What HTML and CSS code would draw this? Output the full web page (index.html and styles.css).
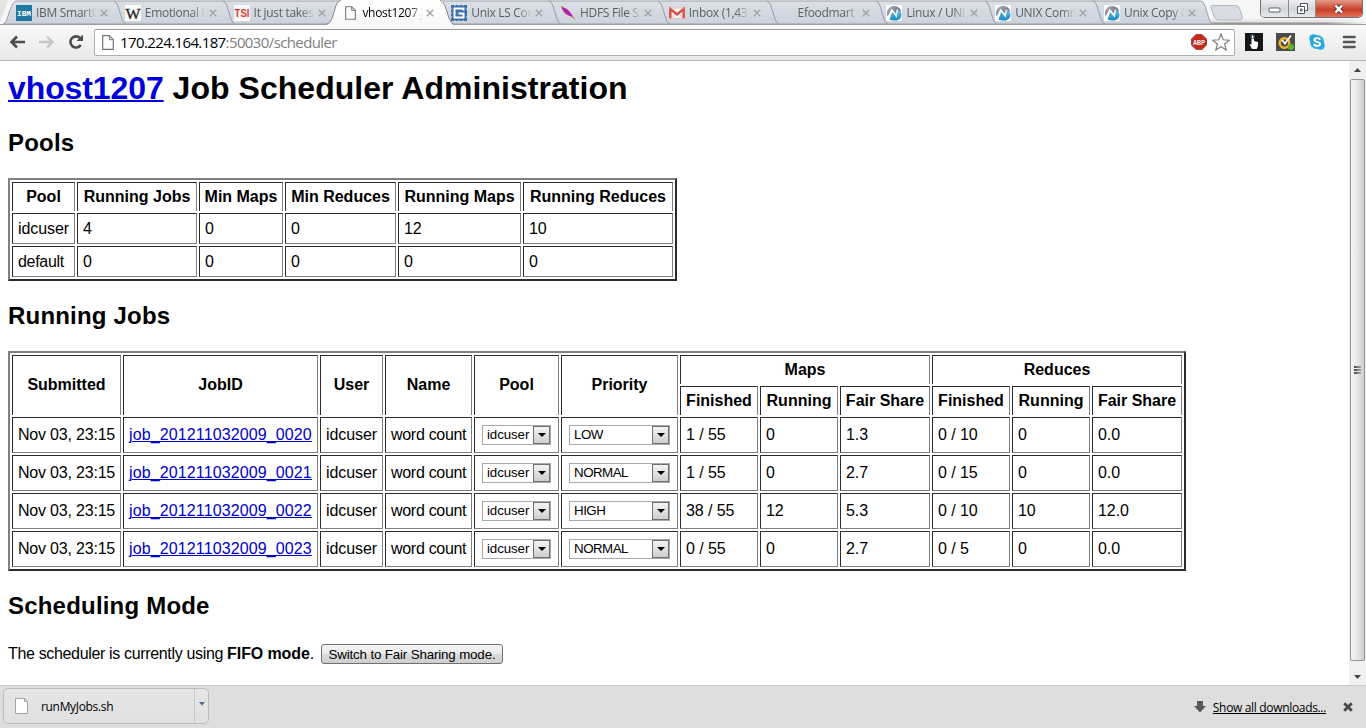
FILE: index.html
```html
<!DOCTYPE html>
<html lang="en">
<head>
<meta charset="utf-8">
<title>vhost1207 Job Scheduler Administration</title>
<link rel="stylesheet" href="styles.css">
</head>
<body>
<svg class="defs" width="0" height="0" aria-hidden="true">
  <defs>
    <linearGradient id="g-tab" x1="0" y1="0" x2="0" y2="1"><stop offset="0" stop-color="#dce1e8"/><stop offset="1" stop-color="#ccd2db"/></linearGradient>
    <linearGradient id="g-active" x1="0" y1="0" x2="0" y2="1"><stop offset="0" stop-color="#ffffff"/><stop offset="1" stop-color="#f8f8f8"/></linearGradient>
    <linearGradient id="g-shade" x1="0" y1="0" x2="0" y2="1"><stop offset="0" stop-color="#f6f6f6"/><stop offset=".5" stop-color="#e2e2e2"/><stop offset="1" stop-color="#5c5c5c"/></linearGradient>
    <linearGradient id="g-fade" x1="0" y1="0" x2="1" y2="0"><stop offset="0" stop-color="#f6f6f6" stop-opacity="0"/><stop offset="1" stop-color="#f6f6f6"/></linearGradient>
    <linearGradient id="g-blue" x1="0" y1="0" x2="0" y2="1"><stop offset="0" stop-color="#5cc4ee"/><stop offset="1" stop-color="#1c87c0"/></linearGradient>
    <linearGradient id="g-grey" x1="0" y1="0" x2="1" y2="1"><stop offset="0" stop-color="#b9b9c6"/><stop offset="1" stop-color="#4b4b63"/></linearGradient>
    <symbol id="i-close" viewBox="0 0 8 8"><path d="M.8.8 7.2 7.2M7.2.8.8 7.2" stroke="#a3a7ad" stroke-width="1.6" fill="none"/></symbol>
    <symbol id="i-page" viewBox="0 0 12 15"><path d="M.7.7h6.6l4 4v9.6H.7z" fill="#fff" stroke="#777" stroke-width="1.2"/><path d="M7.3.7v4h4" fill="none" stroke="#777"/></symbol>
    <symbol id="i-unix" viewBox="0 0 16 16"><rect width="16" height="16" fill="#fbfbfb"/><path d="M1.500 11.500C-.5 5 3.500 1 8 1c3.800 0 6.500 2 7 6L11 5v4.500L5.500 4z" fill="url(#g-grey)"/><path d="M3.500 14.500 5.800 6l4.400 5.500L11.500 5c2 .5 4 2.200 4 5 0 3.500-3 5.500-6.500 5.500-2 0-4-.2-5.500-1z" fill="url(#g-blue)"/><path d="M2.800 14 6 5.300l4.300 5.700 1-6.500" fill="none" stroke="#fff" stroke-width="1.400"/></symbol>
  </defs>
</svg>
<div class="window">
  <header class="tabstrip">
    <svg class="tabshapes" width="1366" height="25" viewBox="0 0 1366 25" aria-hidden="true">
      <rect width="1366" height="25" fill="#f6f6f6"/>
      <path d="M0 0h8L0 22z" fill="#e4e4e4"/>
      <path d="M1202 18h164v7h-164z" fill="url(#g-shade)"/>
      <path d="M1325 17h41v8h-41z" fill="url(#g-fade)"/>
      <path d="M3 24c3-1 4-5 6-11s4-11 7-12h1185q3 1 4 5l4 13q1 4 4 5z" fill="url(#g-tab)" stroke="#9ba1a8"/>
      <g fill="none" stroke="#969ca4">
        <path d="M114 1q3 1 4 5l4 13q1 4 4 5M223 1q3 1 4 5l4 13q1 4 4 5M549 1q3 1 4 5l4 13q1 4 4 5M658 1q3 1 4 5l4 13q1 4 4 5M767 1q3 1 4 5l4 13q1 4 4 5M876 1q3 1 4 5l4 13q1 4 4 5M985 1q3 1 4 5l4 13q1 4 4 5M1093 1q3 1 4 5l4 13q1 4 4 5"/>
      </g>
      <path d="M0 24.500h1366" stroke="#9a9fa5"/>
      <path d="M326 25q4-1 6-6l4-13q1-5 5-6h100q3 1 4 6l4 13q2 5 5 6z" fill="url(#g-active)"/>
      <path d="M326 24.500q4-1 6-6l4-13q1-4 5-5.500M440 0q3 1 5 6l4 12q2 5 5 6.500" fill="none" stroke="#888"/>
      <path d="M1212 5.500h23q4 0 5 4l2 7q1 3.500-3 3.500h-20q-4 0-5-4l-3-8q-.5-2.500 1-2.500z" fill="#d9dde3" stroke="#b3b7bd"/>
    </svg>
    <div class="tabs">
      <div class="tab"><svg class="fav" viewBox="0 0 16 16"><rect width="16" height="16" fill="#23789f"/><text x="8" y="10.500" class="ibm" text-anchor="middle" textLength="14" lengthAdjust="spacingAndGlyphs">IBM</text></svg><span class="title">IBM SmartC</span><svg class="x"><use href="#i-close"/></svg></div>
      <div class="tab"><svg class="fav" viewBox="0 0 16 16"><rect width="16" height="16" fill="#fafafa"/><text x="8" y="13.500" class="wiki" text-anchor="middle" textLength="15" lengthAdjust="spacingAndGlyphs">W</text></svg><span class="title">Emotional i</span><svg class="x"><use href="#i-close"/></svg></div>
      <div class="tab"><svg class="fav" viewBox="0 0 16 16"><rect width="16" height="16" fill="#f7f7f7"/><text x="8" y="11.500" class="tsi" text-anchor="middle" textLength="15" lengthAdjust="spacingAndGlyphs">TSI</text></svg><span class="title">It just takes</span><svg class="x"><use href="#i-close"/></svg></div>
      <div class="tab active"><span class="fav"><svg class="pageicon"><use href="#i-page"/></svg></span><span class="title">vhost1207 J</span><svg class="x"><use href="#i-close"/></svg></div>
      <div class="tab"><svg class="fav" viewBox="0 0 16 16"><rect width="16" height="16" fill="#3c70a8"/><path d="M12.500 5.500V3.500h-9v9h9v-4H7.500" fill="none" stroke="#fff" stroke-width="2"/><path d="M0 4h1M0 8h1M0 12h1M15 4h1M15 12h1M4 0v1M8 0v1M12 0v1M4 15v1M8 15v1M12 15v1" stroke="#dfe8f2"/></svg><span class="title">Unix LS Con</span><svg class="x"><use href="#i-close"/></svg></div>
      <div class="tab"><svg class="fav" viewBox="0 0 16 16"><path d="M1.500 2c3.500 0 7.500 3 10 7l3 4.500-4.500-2.500C6 10 2.500 6.500 1.500 2z" fill="#c222a4"/><path d="M2 2l9 9" stroke="#8b2a8e"/><path d="M12 11l3 3.500M1 1.500l3 1" stroke="#e07a3a"/></svg><span class="title">HDFS File S</span><svg class="x"><use href="#i-close"/></svg></div>
      <div class="tab"><svg class="fav" viewBox="0 0 16 16"><path d="M0 2.500h16v11H0z" fill="#fbf3f2"/><path d="M1.300 13.500V4L8 9.500 14.700 4v9.500" fill="none" stroke="#d9534c" stroke-width="2.500"/><path d="M0 3h16M0 13.300h16M3 12l3-3M13 12l-3-3" stroke="#e3a5a1" stroke-width=".7"/></svg><span class="title">Inbox (1,437</span><svg class="x"><use href="#i-close"/></svg></div>
      <div class="tab"><span class="fav"></span><span class="title">Efoodmart</span><svg class="x"><use href="#i-close"/></svg></div>
      <div class="tab"><svg class="fav"><use href="#i-unix"/></svg><span class="title">Linux / UNI</span><svg class="x"><use href="#i-close"/></svg></div>
      <div class="tab"><svg class="fav"><use href="#i-unix"/></svg><span class="title">UNIX Com<span class="thin">m</span></span><svg class="x"><use href="#i-close"/></svg></div>
      <div class="tab"><svg class="fav"><use href="#i-unix"/></svg><span class="title">Unix Copy C</span><svg class="x"><use href="#i-close"/></svg></div>
    </div>
    <div class="controls">
      <span class="ctl min"><svg width="14" height="6"><rect x="1" y="1" width="11" height="4" rx="1" fill="#fff" stroke="#5d6270"/></svg></span>
      <span class="ctl max"><svg width="13" height="13"><path d="M4.500 1.500h7v7h-7z" fill="#fff" stroke="#4f5360"/><path d="M1.500 4.500h7v7h-7z" fill="#fff" stroke="#4f5360"/><path d="M4.500 7h1.500v2H4.500z" fill="#fff" stroke="#4f5360"/></svg></span>
      <span class="ctl shut"><svg width="14" height="12"><path d="M3.500 2.500 10 9.500M10 2.500 3.500 9.500" stroke="#6b3431" stroke-width="4.500"/><path d="M3.500 2.500 10 9.500M10 2.500 3.500 9.500" stroke="#fff" stroke-width="2.500"/></svg></span>
    </div>
  </header>
  <nav class="toolbar">
    <div class="navicons">
      <svg width="16" height="16"><path d="M2 8h14M8 2.500 2.500 8 8 13.500" fill="none" stroke="#4c4c4c" stroke-width="2.600"/></svg>
      <svg width="16" height="16"><path d="M0 8h14M8 2.500 13.500 8 8 13.500" fill="none" stroke="#c6c6c6" stroke-width="2.400"/></svg>
      <svg width="16" height="16"><path d="M12.700 11A5.600 5.600 0 1 1 12 4" fill="none" stroke="#4c4c4c" stroke-width="2.600"/><path d="M15 .5V7H8.500z" fill="#4c4c4c"/></svg>
    </div>
    <div class="omnibox">
      <svg class="pageicon big"><use href="#i-page"/></svg>
      <span class="url">170.224.164.187<i>:50030/scheduler</i></span>
      <svg class="abp" width="16" height="16"><path d="M5 .5h6L15.500 5v6L11 15.500H5L.5 11V5z" fill="#c5281c" stroke="#a5443c"/><text x="8" y="11" text-anchor="middle" textLength="12" lengthAdjust="spacingAndGlyphs">ABP</text></svg>
      <svg class="star" width="18" height="18"><path d="M9 1l2.200 5.800 6.100.4-4.700 3.800 1.600 6L9 13.700 3.800 17l1.600-6L.7 7.200l6.100-.4z" fill="#fff" stroke="#808080" stroke-width="1.200"/></svg>
    </div>
    <div class="extensions">
      <svg width="18" height="18"><rect width="18" height="18" fill="#171717"/><path d="M6.500 5q.2-3 1-3T9 5v3l4 1v4l-1.300 3H7L4.500 11l2 .5z" fill="#fff"/><circle cx="7.500" cy="3.500" r="2" fill="none" stroke="#315c70"/></svg>
      <svg width="19" height="18"><rect width="19" height="18" fill="#4b4b49"/><circle cx="8.500" cy="10" r="4.800" fill="none" stroke="#efb42a" stroke-width="2.400"/><path d="M6 7l3 3.500L15 2.500" fill="none" stroke="#fff" stroke-width="1.800"/><circle cx="15" cy="14" r="3" fill="#5cb52e"/></svg>
      <svg width="16" height="16"><circle cx="8" cy="8" r="7" fill="#2ba8e0"/><circle cx="4.500" cy="4.500" r="4.300" fill="#2ba8e0"/><circle cx="11.500" cy="11.500" r="4.300" fill="#2ba8e0"/><path d="M11 5.700C10.500 3.500 5.400 3.500 5.400 6c0 2.400 5.600 1.300 5.600 4 0 2.500-5.500 2.500-6 0" fill="none" stroke="#fff" stroke-width="1.900"/></svg>
      <svg class="menu" width="14" height="14"><path d="M2 2h10.500M2 7h10.500M2 12h10.500" stroke="#555" stroke-width="2.600" stroke-linecap="round"/></svg>
    </div>
  </nav>
  <div class="viewport">
    <main class="page">
      <h1><a href="#">vhost1207</a> Job Scheduler Administration</h1>
      <h2>Pools</h2>
      <table class="grid pools">
        <colgroup><col class="w63"><col class="w120"><col class="w84"><col class="w111"><col class="w123"><col class="w150"></colgroup>
        <tr class="head"><th>Pool</th><th>Running Jobs</th><th>Min Maps</th><th>Min Reduces</th><th>Running Maps</th><th>Running Reduces</th></tr>
        <tr><td>idcuser</td><td>4</td><td>0</td><td>0</td><td>12</td><td>10</td></tr>
        <tr><td class="snug">default</td><td>0</td><td>0</td><td>0</td><td>0</td><td>0</td></tr>
      </table>
      <h2>Running Jobs</h2>
      <table class="grid jobs">
        <colgroup><col class="w109"><col class="w195"><col class="w63"><col class="w87"><col class="w85"><col class="w117"><col class="w78"><col class="w78"><col class="w90"><col class="w78"><col class="w78"><col class="w90"></colgroup>
        <tr class="head tall"><th rowspan="2">Submitted</th><th rowspan="2">JobID</th><th rowspan="2">User</th><th rowspan="2">Name</th><th rowspan="2">Pool</th><th rowspan="2">Priority</th><th colspan="3">Maps</th><th colspan="3">Reduces</th></tr>
        <tr class="head"><th>Finished</th><th>Running</th><th>Fair Share</th><th>Finished</th><th>Running</th><th>Fair Share</th></tr>
        <tr><td class="date">Nov 03, 23:15</td><td class="job"><a href="#">job_201211032009_0020</a></td><td>idcuser</td><td class="snug">word count</td><td><span class="select pool">idcuser<b></b></span></td><td><span class="select prio">LOW<b></b></span></td><td>1 / 55</td><td>0</td><td>1.3</td><td>0 / 10</td><td>0</td><td>0.0</td></tr>
        <tr><td class="date">Nov 03, 23:15</td><td class="job"><a href="#">job_201211032009_0021</a></td><td>idcuser</td><td class="snug">word count</td><td><span class="select pool">idcuser<b></b></span></td><td><span class="select prio">NORMAL<b></b></span></td><td>1 / 55</td><td>0</td><td>2.7</td><td>0 / 15</td><td>0</td><td>0.0</td></tr>
        <tr><td class="date">Nov 03, 23:15</td><td class="job"><a href="#">job_201211032009_0022</a></td><td>idcuser</td><td class="snug">word count</td><td><span class="select pool">idcuser<b></b></span></td><td><span class="select prio">HIGH<b></b></span></td><td>38 / 55</td><td>12</td><td>5.3</td><td>0 / 10</td><td>10</td><td>12.0</td></tr>
        <tr><td class="date">Nov 03, 23:15</td><td class="job"><a href="#">job_201211032009_0023</a></td><td>idcuser</td><td class="snug">word count</td><td><span class="select pool">idcuser<b></b></span></td><td><span class="select prio">NORMAL<b></b></span></td><td>0 / 55</td><td>0</td><td>2.7</td><td>0 / 5</td><td>0</td><td>0.0</td></tr>
      </table>
      <h2>Scheduling Mode</h2>
      <div class="mode"><span>The scheduler is currently using <strong>FIFO mode</strong>.</span><button>Switch to Fair Sharing mode.</button></div>
    </main>
    <div class="scrollbar">
      <span class="arrow"><svg width="7" height="4"><path d="M0 4 3.500 0 7 4z" fill="#444"/></svg></span>
      <span class="thumb"><i></i><i></i><i></i></span>
      <span class="arrow"><svg width="7" height="4"><path d="M0 0h7L3.500 4z" fill="#444"/></svg></span>
    </div>
  </div>
  <footer class="downloads">
    <div class="item">
      <svg width="13" height="16"><path d="M.5.500h9l3 3v12H.5z" fill="#fff" stroke="#a5a5a5"/><path d="M9.500.5v3h3" fill="none" stroke="#a5a5a5"/></svg>
      <span class="name">runMyJobs.sh</span>
      <span class="more"><svg width="6" height="4"><path d="M0 0h6L3 3.500z" fill="#4d6b94"/></svg></span>
    </div>
    <div class="all">
      <svg width="12" height="12"><path d="M3 0h6v5h3L6 11.500 0 5h3z" fill="#5a5a5a"/></svg>
      <a href="#">Show all downloads...</a>
      <svg class="dismiss" width="10" height="10"><path d="M1.200 1.200 8.800 8.800M8.800 1.200 1.200 8.800" stroke="#484848" stroke-width="2.800"/></svg>
    </div>
  </footer>
</div>
</body>
</html>
```
FILE: styles.css
```css
* { box-sizing: border-box; }
body { margin: 0; font-family: "Liberation Sans", Arial, sans-serif; font-size: 16px; color: #000; background: #fff; }
svg { display: block; flex: none; }
.defs { position: absolute; }
.window { width: 1366px; height: 728px; display: flex; flex-direction: column; overflow: hidden; }

.tabstrip { position: relative; height: 25px; flex: none; font-family: "Open Sans", "Noto Sans", sans-serif; }
.tabshapes { position: absolute; left: 0; top: 0; }
.tabs { position: relative; display: flex; padding: 5px 0 0 16px; }
.tab { display: flex; align-items: center; width: 108.8px; height: 16px; flex: none; }
.fav { width: 16px; height: 16px; display: flex; align-items: center; justify-content: center; flex: none; }
.title { width: 62px; margin-left: 4px; font-size: 12px; line-height: 16px; letter-spacing: -.3px; color: #5c6066; white-space: nowrap; flex: none; -webkit-mask-image: linear-gradient(90deg, #000 76%, transparent 98%); mask-image: linear-gradient(90deg, #000 76%, transparent 98%); }
.thin { letter-spacing: 0; }
.active .title { color: #000; }
.x { width: 8px; height: 8px; margin-left: 2px; }
.pageicon { width: 11px; height: 14px; }
.ibm { font: bold 7px "Liberation Mono", monospace; fill: #fff; }
.wiki { font: 15px "Liberation Serif", serif; fill: #222; stroke: #222; stroke-width: .3px; }
.tsi { font: bold 10px "Liberation Sans", sans-serif; fill: #dd3b35; }

.controls { position: absolute; left: 1260px; top: 0; width: 103px; height: 18px; display: flex; border: 1px solid #6f7379; border-top: 0; border-radius: 0 0 5px 5px; overflow: hidden; }
.ctl { display: flex; align-items: center; justify-content: center; background: linear-gradient(#efefef, #d3d5d8 50%, #e9e9e9); }
.min { width: 28px; border-right: 1px solid #8b8f95; padding-top: 3px; }
.max { width: 27px; border-right: 1px solid #8b8f95; }
.shut { flex: 1; background: linear-gradient(#e39a8a, #cb4a33 50%, #c93d28 60%, #e0735a); }

.toolbar { display: flex; align-items: center; height: 36px; flex: none; border-bottom: 1px solid #b5b5b5; background: linear-gradient(#f9f9f9, #e9e9e9); padding-bottom: 1px; }
.navicons { display: flex; gap: 14px; width: 94px; padding-left: 9px; }
.navicons svg:nth-child(3) { margin-left: -1px; }
.omnibox { display: flex; align-items: center; width: 1141px; height: 27px; border: 1px solid #b0b0b0; border-top-color: #989898; border-radius: 2px; background: #fff; padding: 0 4px 0 7px; }
.big { width: 12px; height: 15px; }
.url { font: 15px "Open Sans", "Noto Sans", sans-serif; margin-left: 6px; letter-spacing: -.61px; flex: 1; white-space: nowrap; }
.url i { font-style: normal; color: #808080; }
.abp text { font: bold 8px "Liberation Sans", sans-serif; fill: #fff; }
.star { margin-left: 5px; }
.extensions { display: flex; align-items: center; padding-left: 10px; }
.extensions svg:nth-child(2) { margin-left: 13px; }
.extensions svg:nth-child(3) { margin-left: 14px; }
.extensions .menu { margin-left: 17px; }

.viewport { display: flex; height: 624px; flex: none; }
.page { flex: 1; padding: 9px 8px 0; }
h1 { font-size: 32px; line-height: 37px; margin: 0 0 22px; letter-spacing: .04px; white-space: nowrap; }
h2 { font-size: 24px; line-height: 28px; margin: 21px 0; letter-spacing: .2px; }
h1 + h2 { margin-top: 0; }
a { color: #0000cc; text-decoration-thickness: 1px; }
h1 a { color: #0000dd; letter-spacing: -.1px; text-decoration-thickness: 2px; }

.grid { table-layout: fixed; border-collapse: separate; border-spacing: 2px; border: 2px solid; border-color: #808080 #2b2b2b #2b2b2b #808080; line-height: 18px; }
.grid tr { height: 31px; }
.grid tr.head { height: 29px; }
.jobs tr { height: 36px; }
.jobs tr:not(.head) { height: 36px; }
.pools { width: 669px; }
.jobs { width: 1178px; }
th, td { padding: 0 0 0 5px; border: 1px solid; border-color: #2b2b2b #808080 #808080 #2b2b2b; white-space: nowrap; }
th { padding: 0; text-align: center; border-bottom: 0; }
th[rowspan] { padding-bottom: 2px; }
td { text-align: left; letter-spacing: -.08px; }
.date { letter-spacing: -.2px; }
.job { letter-spacing: .12px; }
.snug { letter-spacing: -.3px; }
.w63 { width: 63px; }
.w78 { width: 78px; }
.w84 { width: 84px; }
.w85 { width: 85px; }
.w87 { width: 87px; }
.w90 { width: 90px; }
.w109 { width: 109px; }
.w111 { width: 111px; }
.w117 { width: 117px; }
.w120 { width: 120px; }
.w123 { width: 123px; }
.w150 { width: 150px; }
.w195 { width: 195px; }

.select { display: flex; align-items: center; justify-content: space-between; height: 20px; margin-left: 2px; border: 1px solid #a9a9a9; padding-left: 4px; font-size: 13.333px; line-height: 18px; letter-spacing: -.1px; background: #fff; }
.pool { width: 69px; }
.prio { width: 101px; letter-spacing: -.5px; }
.select b { width: 17px; height: 18px; border: 1px solid #707070; background: linear-gradient(#f3f3f3, #cfcfcf); display: flex; align-items: center; justify-content: center; }
.select b::after { content: ""; border: 4px solid transparent; border-top-color: #000; border-bottom: 0; }

.mode { display: flex; align-items: center; height: 20px; margin-top: 24px; white-space: nowrap; }
.mode span { width: 305px; letter-spacing: -.34px; }
.mode strong { letter-spacing: -.1px; }
button { width: 182px; height: 20px; margin-left: 8px; padding: 0; border: 1px solid #707070; border-radius: 3px; background: linear-gradient(#f3f3f3, #ebebeb 50%, #dcdcdc 50%, #cfcfcf); font: 13.333px "Liberation Sans", Arial, sans-serif; letter-spacing: -.15px; color: #000; }

.scrollbar { width: 17px; display: flex; flex-direction: column; background: #f0f0f0; }
.arrow { height: 17px; flex: none; display: flex; align-items: center; justify-content: center; }
.thumb { height: 582px; margin: 1px 1px 7px; border: 1px solid #959595; border-radius: 2px; background: linear-gradient(90deg, #f5f5f5, #e6e6e6 50%, #cdcdd0); display: flex; flex-direction: column; gap: 1px; align-items: center; justify-content: center; flex: none; }
.thumb i { width: 7px; height: 2px; background: linear-gradient(90deg, #444, #aaa); }

.downloads { display: flex; justify-content: space-between; height: 43px; background: #dedede; border-top: 1px solid #cdcdcd; font-family: "Open Sans", "Noto Sans", sans-serif; font-size: 12px; letter-spacing: -.33px; }
.item { display: flex; align-items: center; width: 206px; height: 36px; margin: 2px 0 0 3px; padding-left: 11px; border: 1px solid #bcbcbc; border-radius: 5px; background: linear-gradient(#e6e6e6, #dfe0e1); }
.name { flex: 1; margin-left: 13px; }
.more { width: 14px; height: 100%; border-left: 1px solid #c8c8c8; display: flex; justify-content: center; padding-top: 13px; }
.all { display: flex; align-items: center; padding-right: 13px; }
.all a { color: #000; margin: 0 17px 0 7px; }
```
